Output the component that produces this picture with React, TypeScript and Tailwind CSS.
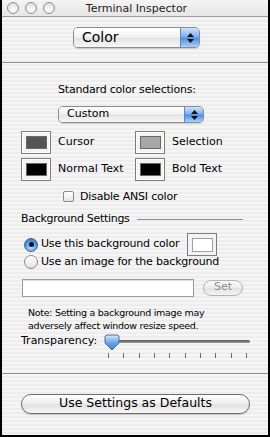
const stripes =
  "bg-[repeating-linear-gradient(180deg,#ededed_0px,#ededed_2px,#f5f5f5_2px,#f5f5f5_4px)]";

const Light = () => (
  <div className="w-[12px] h-[12px] rounded-full border border-[#8d8d8d] bg-[radial-gradient(circle_at_50%_70%,#ffffff,#d6d6d6)]" />
);

const Popup = ({ label, w, h, text }: { label: string; w: string; h: string; text: string }) => (
  <div
    className={`flex ${w} ${h} rounded-[5px] border border-[#8c8c8c] overflow-hidden shadow-[0_1px_1px_rgba(0,0,0,0.15)]`}
  >
    <div className={`flex-1 flex items-center pl-[8px] ${text} text-black bg-[linear-gradient(180deg,#ffffff,#f2f2f2_45%,#e4e4e4_55%,#f7f7f7)]`}>
      {label}
    </div>
    <div className="w-[19px] flex flex-col items-center justify-center gap-[2px] border-l border-[#5f86c0] bg-[linear-gradient(180deg,#cfe2fa,#7fb0ee_45%,#4f8fe3_55%,#a9d2fb)]">
      <svg width="7" height="4" viewBox="0 0 7 4">
        <path d="M0 4 L3.5 0 L7 4 Z" fill="#111" />
      </svg>
      <svg width="7" height="4" viewBox="0 0 7 4">
        <path d="M0 0 L3.5 4 L7 0 Z" fill="#111" />
      </svg>
    </div>
  </div>
);

const Well = ({ color }: { color: string }) => (
  <div className="w-[30px] h-[23px] border border-[#7d7d7d] bg-[#f3f3f3] flex items-center justify-center shadow-[inset_0_0_0_1px_#ffffff]">
    <div className={`w-[21px] h-[13px] border border-[#6a6a6a] ${color}`} />
  </div>
);

const Radio = ({ on }: { on?: boolean }) =>
  on ? (
    <div className="w-[14px] h-[14px] rounded-full border border-[#3a5f9a] bg-[radial-gradient(circle_at_50%_70%,#bfe0ff,#4e8ee0_60%,#3b77c8)] flex items-center justify-center">
      <div className="w-[5px] h-[5px] rounded-full bg-[#111]" />
    </div>
  ) : (
    <div className="w-[14px] h-[14px] rounded-full border border-[#8a8a8a] bg-[linear-gradient(180deg,#ffffff,#e2e2e2)]" />
  );

export default function App() {
  const ticks = [0, 1, 2, 3, 4, 5, 6, 7, 8, 9];
  return (
    <div
      className={`w-[270px] h-[437px] flex flex-col border-x-2 border-b-2 border-black ${stripes} font-['Lucida_Grande','DejaVu_Sans',sans-serif] text-[11px] text-black overflow-hidden`}
    >
      {/* title bar */}
      <div className="relative h-[17px] flex items-center border-b border-[#9d9d9d] bg-[linear-gradient(180deg,#f4f4f4,#e6e6e6)]">
        <div className="flex gap-[6px] pl-[5px]">
          <Light />
          <Light />
          <Light />
        </div>
        <div className="flex-1 text-center text-[11px] leading-none pr-[50px] text-[#222]">Terminal Inspector</div>
      </div>

      {/* tab popup */}
      <div className="h-[45px] pt-[10px] pl-[71px]">
        <Popup label="Color" w="w-[127px]" h="h-[21px]" text="text-[14px]" />
      </div>
      <div className="h-px bg-[#8f8f8f]" />

      {/* colors */}
      <div className="flex flex-col pl-[19px]">
        <div className="mt-[20px] pl-[37px] leading-[13px] tracking-[-0.2px]">Standard color selections:</div>
        <div className="mt-[10px] pl-[37px]">
          <Popup label="Custom" w="w-[146px]" h="h-[17px]" text="text-[11px]" />
        </div>
        <div className="mt-[8px] grid grid-cols-[114px_1fr] gap-y-[4px]">
          <div className="flex items-center gap-[7px]">
            <Well color="bg-[#555555]" />
            <span>Cursor</span>
          </div>
          <div className="flex items-center gap-[7px]">
            <Well color="bg-[#a6a6a6]" />
            <span>Selection</span>
          </div>
          <div className="flex items-center gap-[7px]">
            <Well color="bg-black" />
            <span>Normal Text</span>
          </div>
          <div className="flex items-center gap-[7px]">
            <Well color="bg-black" />
            <span>Bold Text</span>
          </div>
        </div>
        <div className="mt-[9px] pl-[42px] flex items-center gap-[6px]">
          <div className="w-[11px] h-[11px] rounded-[2px] border border-[#8a8a8a] bg-[linear-gradient(180deg,#ffffff,#e4e4e4)]" />
          <span className="leading-[13px] tracking-[-0.2px]">Disable ANSI color</span>
        </div>

        {/* background */}
        <div className="mt-[9px] flex items-center pr-[25px]">
          <span className="leading-[14px] tracking-[-0.3px]">Background Settings</span>
          <div className="flex-1 ml-[7px] h-px bg-[#8a8a8a]" />
        </div>
        <div className="mt-[7px] flex items-center pl-[3px]">
          <Radio on />
          <span className="ml-[3px] tracking-[-0.2px]">Use this background color</span>
          <div className="ml-[8px] w-[30px] h-[23px] border border-[#7d7d7d] bg-[#f3f3f3] flex items-center justify-center">
            <div className="w-[21px] h-[14px] border border-[#a0a0a0] bg-white" />
          </div>
        </div>
        <div className="mt-[-2px] flex items-center pl-[3px]">
          <Radio />
          <span className="ml-[3px] tracking-[-0.2px]">Use an image for the background</span>
        </div>
        <div className="mt-[8px] flex items-center">
          <div className="ml-[1px] w-[172px] h-[18px] border border-[#9a9a9a] bg-white shadow-[inset_0_1px_1px_rgba(0,0,0,0.15)]" />
          <div className="ml-[9px] w-[40px] h-[16px] rounded-full border border-[#b3b3b3] bg-[linear-gradient(180deg,#fafafa,#ececec_50%,#e2e2e2_51%,#f3f3f3)] flex items-center justify-center text-[11px] text-[#8a8a8a]">
            Set
          </div>
        </div>
        <div className="mt-[9px] pl-[7px] text-[9.5px] leading-[13px] tracking-[-0.3px]">
          Note: Setting a background image may
          <br />
          adversely affect window resize speed.
        </div>

        {/* transparency */}
        <div className="mt-[2px] flex items-start">
          <span className="leading-[14px] w-[83px]">Transparency:</span>
          <div className="relative w-[146px] h-[24px]">
            <div className="absolute left-[2px] right-0 top-[6px] h-[3px] rounded-full bg-[linear-gradient(180deg,#5a5a5a,#9a9a9a)]" />
            <svg className="absolute left-0 top-0" width="16" height="17" viewBox="0 0 16 17">
              <defs>
                <linearGradient id="th" x1="0" y1="0" x2="0" y2="1">
                  <stop offset="0" stopColor="#d8ebff" />
                  <stop offset="0.5" stopColor="#6fa6e8" />
                  <stop offset="1" stopColor="#3e7ccc" />
                </linearGradient>
              </defs>
              <path
                d="M3 1 H13 Q15 1 15 3 V9 L8 16 L1 9 V3 Q1 1 3 1 Z"
                fill="url(#th)"
                stroke="#4a6a9a"
                strokeWidth="1"
              />
            </svg>
            <div className="absolute left-[4px] right-[3px] top-[19px] flex justify-between">
              {ticks.map((t) => (
                <div key={t} className="w-px h-[5px] bg-[#6a6a6a]" />
              ))}
            </div>
          </div>
        </div>
      </div>

      <div className="mt-[15px] h-px bg-[#8f8f8f]" />

      {/* defaults button */}
      <div className="pt-[20px] pl-[19px]">
        <div className="w-[229px] h-[20px] rounded-full border border-[#6e6e6e] bg-[linear-gradient(180deg,#ffffff,#f0f0f0_45%,#e0e0e0_55%,#f8f8f8)] flex items-center justify-center text-[12.5px] shadow-[0_1px_1px_rgba(0,0,0,0.2)]">
          Use Settings as Defaults
        </div>
      </div>
    </div>
  );
}
